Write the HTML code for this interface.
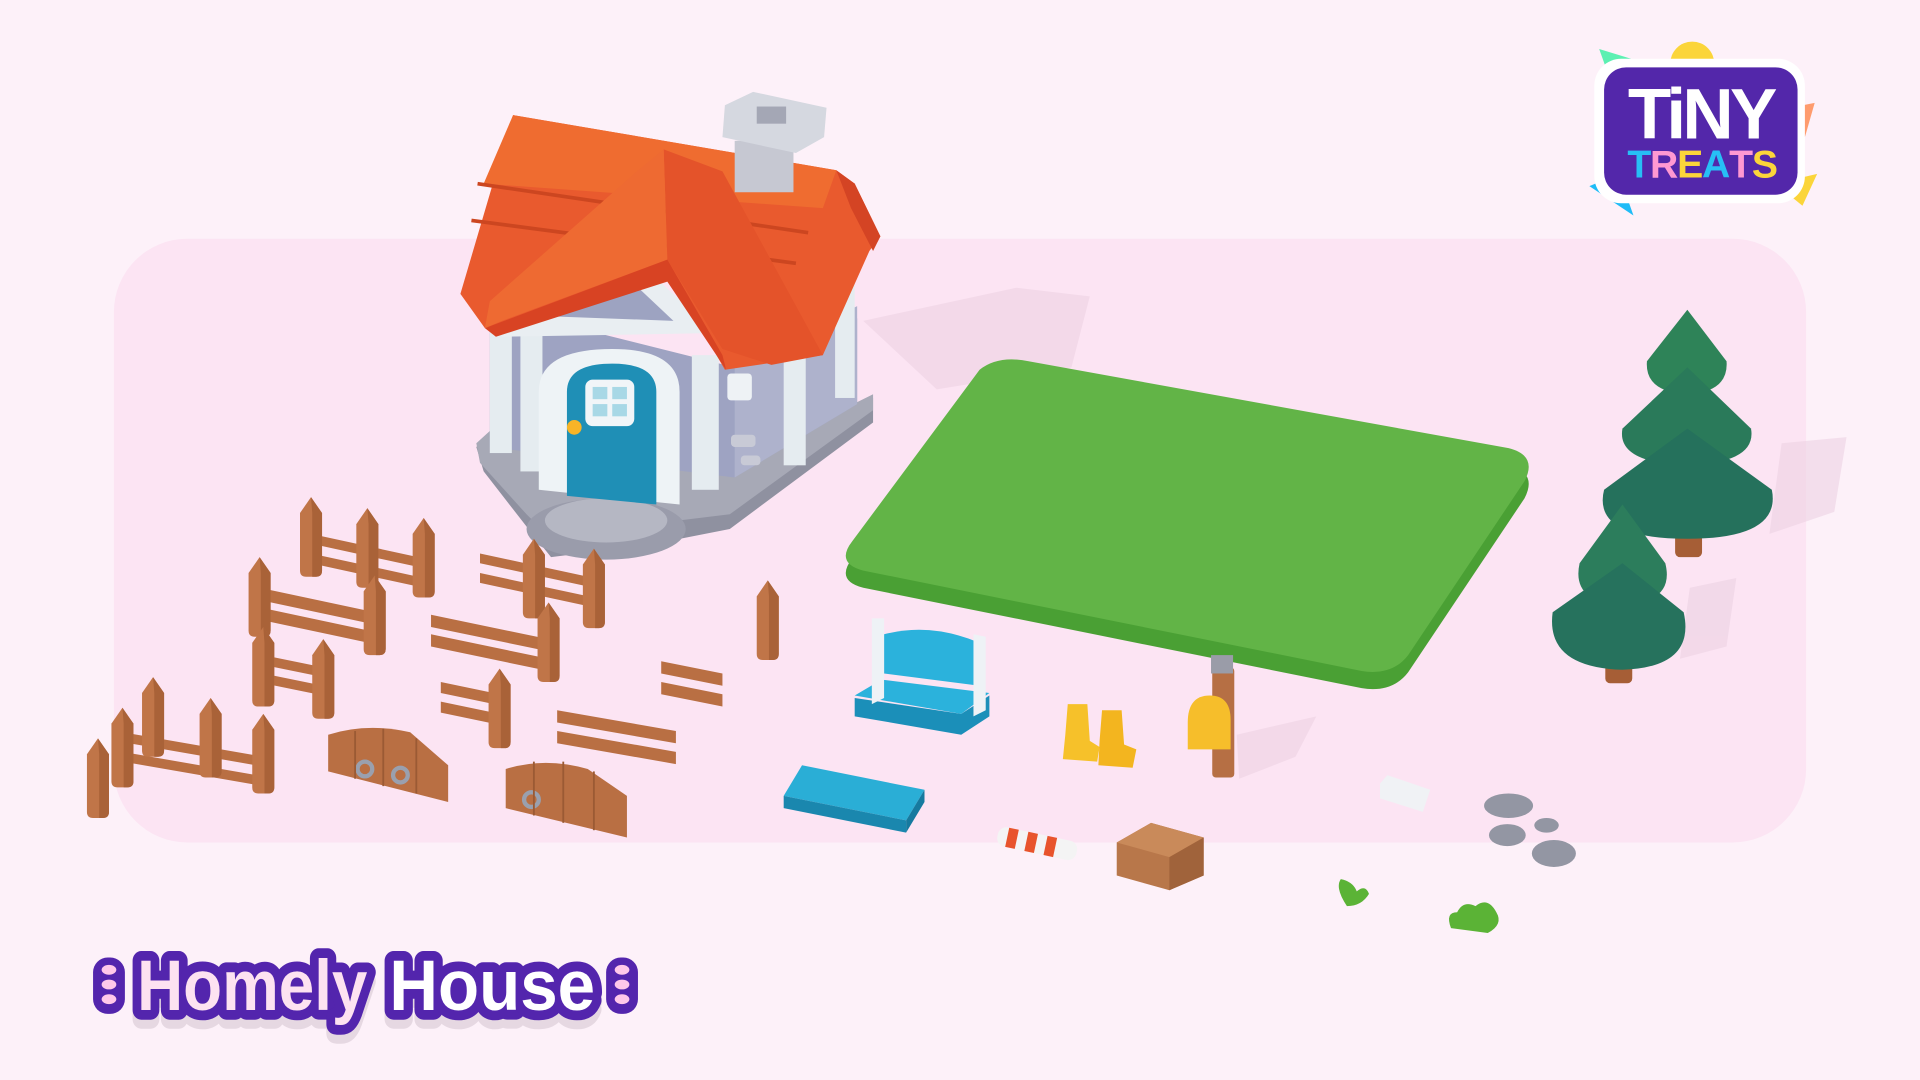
<!DOCTYPE html>
<html><head><meta charset="utf-8"><style>
html,body{margin:0;padding:0;background:#fdf1f9;}
svg{display:block}
</style></head><body>
<svg width="1920" height="1080" viewBox="0 0 1568 882" xmlns="http://www.w3.org/2000/svg">
<defs>
<g id="post">
 <path d="M-9,13 L0,0 L9,13 L9,60 Q9,65 4,65 L-4,65 Q-9,65 -9,60Z" fill="#c07548"/>
 <path d="M0,0 L9,13 L9,60 Q9,65 4,65 L1,65 L1,13Z" fill="#a96238"/>
</g>
<path id="grass" d="M800,302 Q815,290 840,295 L1232,366 Q1256,372 1245,393 L1150,535 Q1137,552 1112,548 L705,466 Q682,460 696,442 Z"/>
</defs>
<rect width="1568" height="882" fill="#fdf1f9"/>
<rect x="93" y="195" width="1382" height="493" rx="60" fill="#fce4f3"/>

<g fill="#ecd2e3" opacity="0.6">
 <path d="M705,262 L830,235 L890,242 L875,300 L765,318Z"/>
 <path d="M1455,362 L1508,357 L1498,418 L1445,436Z"/>
 <path d="M1380,480 L1418,472 L1410,528 L1372,538Z"/>
 <path d="M1010,600 L1075,585 L1058,618 L1012,636Z"/>
</g>

<use href="#grass" y="14" fill="#4aa034"/>
<use href="#grass" fill="#62b447"/>

<g>
 <path d="M389,365 L400,355 L600,380 L713,325 L713,345 L596,432 L530,445 L450,455 L430,430 L395,385Z" fill="#8f91a0"/>
 <path d="M389,362 L400,352 L600,378 L713,322 L713,335 L596,420 L530,428 L450,440 L430,420 L392,378Z" fill="#a7a9b6"/>
 <ellipse cx="495" cy="432" rx="65" ry="25" fill="#9a9cab"/>
 <ellipse cx="495" cy="425" rx="50" ry="18" fill="#b5b7c3"/>
 <path d="M400,250 L600,300 L700,260 L700,330 L600,390 L400,365Z" fill="#9ea3c2"/>
 <path d="M600,300 L700,250 L700,330 L600,390Z" fill="#aeb2cc"/>
 <rect x="400" y="250" width="18" height="120" fill="#e5ecf0"/>
 <rect x="425" y="265" width="18" height="120" fill="#e5ecf0"/>
 <rect x="565" y="290" width="22" height="110" fill="#e5ecf0"/>
 <rect x="640" y="290" width="18" height="90" fill="#e5ecf0"/>
 <rect x="682" y="230" width="16" height="95" fill="#e5ecf0"/>
 <path d="M440,400 L440,320 Q440,285 500,285 Q555,285 555,320 L555,412Z" fill="#eef3f6"/>
 <path d="M463,405 L463,320 Q463,297 500,297 Q536,297 536,320 L536,412Z" fill="#1f8fb6"/>
 <rect x="478" y="310" width="40" height="38" rx="6" fill="#f1f5f8"/>
 <rect x="484" y="316" width="12" height="10" fill="#a8d8e6"/><rect x="500" y="316" width="12" height="10" fill="#a8d8e6"/>
 <rect x="484" y="330" width="12" height="10" fill="#a8d8e6"/><rect x="500" y="330" width="12" height="10" fill="#a8d8e6"/>
 <circle cx="469" cy="349" r="6" fill="#f8b427"/>
 <rect x="594" y="305" width="20" height="22" rx="3" fill="#eef2f5"/>
 <rect x="597" y="355" width="20" height="10" rx="3" fill="#c8cad6"/>
 <rect x="605" y="372" width="16" height="8" rx="3" fill="#c8cad6"/>
 <path d="M410,252 L500,195 L585,272 L410,275Z" fill="#e9eef2"/>
 <path d="M440,258 L500,215 L550,262Z" fill="#9da3c1"/>
 <path d="M500,243 Q484,230 491,226 Q497,222 500,230 Q503,222 509,226 Q516,230 500,243Z" fill="#f4f7f9"/>
 <path d="M419,94 L683,139 L698,150 L719,193 L710,205 L672,290 L592,302 L546,222 L396,268 L376,240Z" fill="#e95a2e"/>
 <path d="M419,94 L683,139 L672,170 L395,150Z" fill="#ef6c30"/>
 <path d="M385,180 L650,215 M390,150 L660,190" stroke="#cc4620" stroke-width="3" fill="none"/>
 <path d="M542,122 L590,140 L672,290 L630,298 L590,285 L545,212Z" fill="#e4532a"/>
 <path d="M542,122 L545,212 L410,262 L396,268 L400,246 L520,140Z" fill="#ee6a32"/>
 <path d="M396,268 L545,212 L590,290 L593,302 L545,230 L405,275Z" fill="#d84323"/>
 <path d="M683,139 L698,150 L719,193 L713,205 L695,170Z" fill="#d44424"/>
 <rect x="600" y="115" width="48" height="42" fill="#c6c8d2"/>
 <path d="M592,86 L615,75 L675,88 L673,112 L650,125 L590,112Z" fill="#d5d8e0"/>
 <rect x="618" y="87" width="24" height="14" fill="#a4a7b5"/>
</g>

<g fill="#b96f43">
 <path d="M254,436 L346,456 L346,464 L254,444Z"/><path d="M254,452 L346,472 L346,480 L254,460Z"/>
 <use href="#post" x="254" y="406"/><use href="#post" x="300" y="415"/><use href="#post" x="346" y="423"/>
 <path d="M212,480 L306,500 L306,510 L212,490Z"/><path d="M212,496 L306,516 L306,526 L212,506Z"/>
 <use href="#post" x="212" y="455"/><use href="#post" x="306" y="470"/>
 <path d="M215,535 L264,545 L264,553 L215,543Z"/><path d="M215,550 L264,560 L264,568 L215,558Z"/>
 <use href="#post" x="215" y="512"/><use href="#post" x="264" y="522"/>
 <path d="M100,598 L215,618 L215,626 L100,606Z"/><path d="M100,614 L215,634 L215,642 L100,622Z"/>
 <use href="#post" x="80" y="603"/><use href="#post" x="100" y="578"/><use href="#post" x="125" y="553"/><use href="#post" x="172" y="570"/><use href="#post" x="215" y="583"/>
 <path d="M392,452 L485,472 L485,480 L392,460Z"/><path d="M392,468 L485,488 L485,496 L392,476Z"/>
 <use href="#post" x="436" y="440"/><use href="#post" x="485" y="448"/>
 <path d="M352,502 L448,522 L448,532 L352,512Z"/><path d="M352,518 L448,538 L448,548 L352,528Z"/>
 <use href="#post" x="448" y="492"/>
 <path d="M360,557 L408,567 L408,576 L360,566Z"/><path d="M360,573 L408,583 L408,592 L360,582Z"/>
 <use href="#post" x="408" y="546"/>
 <path d="M540,540 L590,550 L590,560 L540,550Z"/><path d="M540,557 L590,567 L590,577 L540,567Z"/>
 <path d="M455,580 L552,597 L552,607 L455,590Z"/><path d="M455,597 L552,614 L552,624 L455,607Z"/>
 <use href="#post" x="627" y="474"/>
 <path d="M268,600 Q300,590 335,598 L366,625 L366,655 L268,630Z"/>
 <path d="M413,628 Q445,618 480,628 L512,650 L512,684 L413,660Z"/>
</g>
<g fill="none" stroke="#9aa0ae" stroke-width="3.5">
 <circle cx="298" cy="628" r="6"/><circle cx="327" cy="633" r="6"/><circle cx="434" cy="653" r="6"/>
</g>
<g stroke="#9b5a34" stroke-width="1.5">
 <line x1="290" y1="597" x2="290" y2="636"/><line x1="313" y1="595" x2="313" y2="642"/><line x1="340" y1="603" x2="340" y2="648"/>
 <line x1="436" y1="622" x2="436" y2="666"/><line x1="460" y1="622" x2="460" y2="672"/><line x1="485" y1="630" x2="485" y2="678"/>
</g>

<path d="M698,570 L785,583 L808,568 L808,585 L785,600 L698,585Z" fill="#1b8fb9"/>
<path d="M698,568 L720,555 L808,566 L785,583Z" fill="#2bb2dc"/>
<path d="M722,518 Q760,508 800,525 L800,560 L722,550Z" fill="#2bb2dc"/>
<path d="M712,505 L722,505 L722,570 L712,575Z M795,518 L805,520 L805,580 L795,585Z" fill="#eef2f6"/>
<path d="M640,650 L655,625 L755,645 L740,670Z" fill="#2aaed6"/>
<path d="M640,650 L740,670 L740,680 L640,660Z" fill="#1a87ae"/>
<path d="M740,670 L755,645 L755,655 L740,680Z" fill="#167a9f"/>
<g transform="rotate(12 847 689)"><rect x="814" y="681" width="66" height="16" rx="7" fill="#f4f4f4"/>
<rect x="822" y="681" width="8" height="16" fill="#e8542c"/><rect x="838" y="681" width="8" height="16" fill="#e8542c"/><rect x="854" y="681" width="8" height="16" fill="#e8542c"/></g>
<path d="M912,688 L940,672 L983,684 L983,715 L955,727 L912,715Z" fill="#b8774a"/>
<path d="M912,688 L940,672 L983,684 L955,700Z" fill="#c98a5a"/>
<path d="M955,700 L983,684 L983,715 L955,727Z" fill="#a0633b"/>
<path d="M872,575 L888,575 L890,605 L898,610 L896,622 L868,620 L870,600Z" fill="#f6c12a"/>
<path d="M900,580 L916,580 L918,608 L928,612 L925,627 L897,625 L898,605Z" fill="#f3b51f"/>
<rect x="990" y="545" width="18" height="90" rx="3" fill="#b66f44"/>
<rect x="989" y="535" width="18" height="15" fill="#9a9ca8"/>
<path d="M970,590 Q970,568 988,568 Q1005,568 1005,588 L1005,612 L970,612Z" fill="#f6be2b"/>
<path d="M1127,640 L1133,633 L1168,645 L1162,663 L1127,652Z" fill="#f0f2f5"/>
<g fill="#9396a3"><ellipse cx="1232" cy="658" rx="20" ry="10"/><ellipse cx="1263" cy="674" rx="10" ry="6"/><ellipse cx="1231" cy="682" rx="15" ry="9"/><ellipse cx="1269" cy="697" rx="18" ry="11"/></g>
<path d="M1100,740 Q1090,725 1095,718 Q1105,720 1108,728 Q1115,722 1118,730 Q1112,740 1100,740Z" fill="#5bb336"/>
<path d="M1185,758 Q1180,745 1190,745 Q1195,735 1205,740 Q1215,732 1222,745 Q1228,755 1215,762Z" fill="#5bb336"/>

<rect x="1368" y="425" width="22" height="30" rx="4" fill="#a65e36"/>
<path d="M1378,253 L1410,295 Q1412,320 1378,322 Q1343,320 1345,295Z" fill="#2e8358"/>
<path d="M1378,300 L1430,350 Q1435,378 1378,380 Q1320,378 1325,350Z" fill="#2a7a5a"/>
<path d="M1378,350 L1447,400 Q1455,440 1378,440 Q1300,440 1310,400Z" fill="#25715c"/>
<rect x="1311" y="532" width="22" height="26" rx="4" fill="#a65e36"/>
<path d="M1325,412 L1360,460 Q1368,492 1325,494 Q1283,492 1290,460Z" fill="#2c7d5c"/>
<path d="M1325,460 L1375,500 Q1385,545 1325,547 Q1262,545 1268,500Z" fill="#26725d"/>

<path d="M1306,40 L1332,48 L1316,68Z" fill="#5cf0b2"/>
<circle cx="1382" cy="52" r="18" fill="#fbd53a"/>
<path d="M1462,88 L1482,84 L1474,112Z" fill="#fe9c6e"/>
<path d="M1298,152 L1322,142 L1334,176Z" fill="#1fbcf7"/>
<path d="M1450,150 L1484,142 L1472,168Z" fill="#fbd53a"/>
<rect x="1302" y="48" width="172" height="118" rx="22" fill="#ffffff"/>
<rect x="1310" y="55" width="158" height="104" rx="18" fill="#5327aa"/>
<text x="1389" y="113" text-anchor="middle" font-family="Liberation Sans, sans-serif" font-weight="bold" font-size="58" fill="#ffffff" letter-spacing="-3">TiNY</text>
<text x="1390" y="145" text-anchor="middle" font-family="Liberation Sans, sans-serif" font-weight="bold" font-size="32" letter-spacing="-1"><tspan fill="#27bff5">T</tspan><tspan fill="#ff98d2">R</tspan><tspan fill="#fbd53a">E</tspan><tspan fill="#27bff5">A</tspan><tspan fill="#ff98d2">T</tspan><tspan fill="#fbd53a">S</tspan></text>

<g font-family="Liberation Sans, sans-serif" font-weight="bold" font-size="58">
<text x="112" y="832" textLength="188" lengthAdjust="spacingAndGlyphs" fill="#e6d8e2" stroke="#e6d8e2" stroke-width="16" stroke-linejoin="round">Homely</text>
<text x="318" y="832" textLength="168" lengthAdjust="spacingAndGlyphs" fill="#e6d8e2" stroke="#e6d8e2" stroke-width="16" stroke-linejoin="round">House</text>
<text x="112" y="825" textLength="188" lengthAdjust="spacingAndGlyphs" stroke="#5325ad" stroke-width="16" stroke-linejoin="round" paint-order="stroke" fill="#fde2f1">Homely</text>
<text x="318" y="825" textLength="168" lengthAdjust="spacingAndGlyphs" stroke="#5325ad" stroke-width="16" stroke-linejoin="round" paint-order="stroke" fill="#ffffff">House</text>
</g>
<rect x="76" y="782" width="26" height="46" rx="12" fill="#5325ad"/>
<rect x="495" y="782" width="26" height="46" rx="12" fill="#5325ad"/>
<g fill="#ffc8ea"><ellipse cx="89" cy="792" rx="6" ry="4"/><ellipse cx="89" cy="804" rx="6" ry="4"/><ellipse cx="89" cy="816" rx="6" ry="4"/>
<ellipse cx="508" cy="792" rx="6" ry="4"/><ellipse cx="508" cy="804" rx="6" ry="4"/><ellipse cx="508" cy="816" rx="6" ry="4"/></g>
</svg>
</body></html>
